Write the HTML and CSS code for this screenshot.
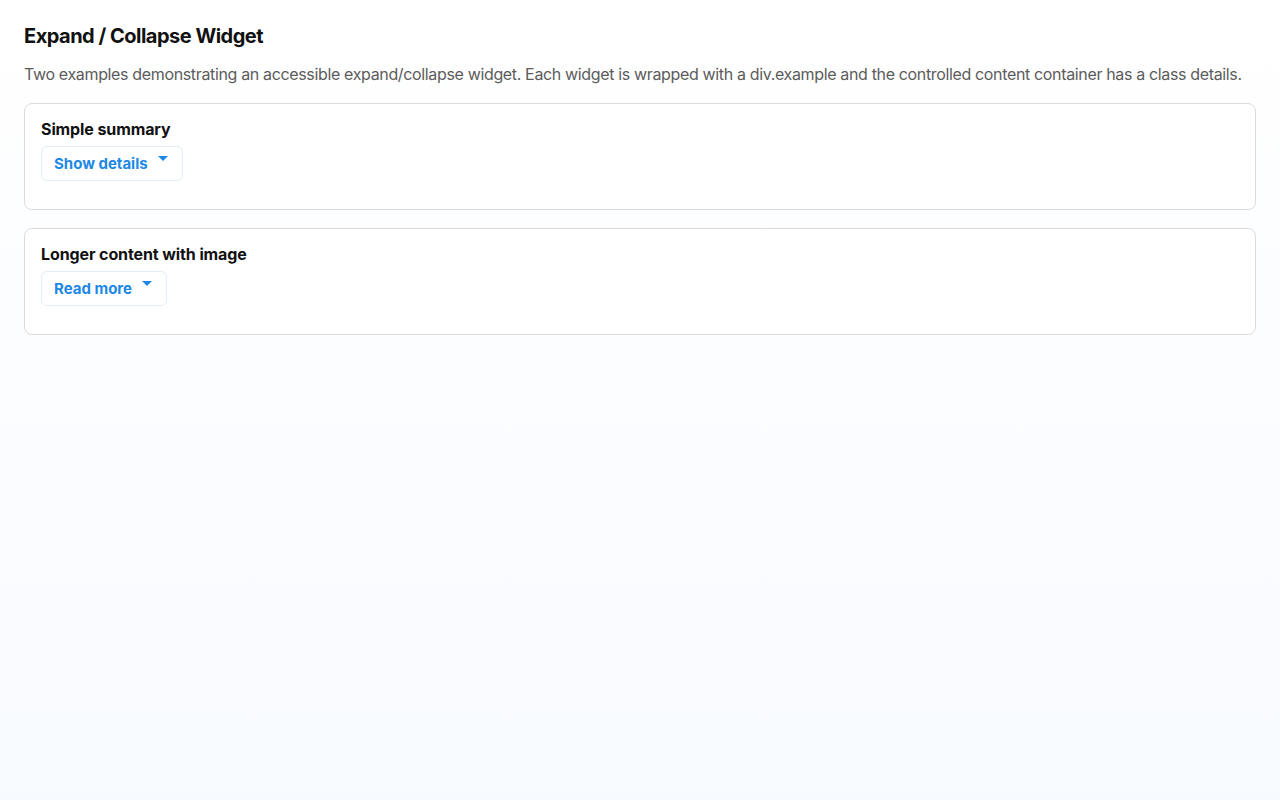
FILE: index.html
```html
<!DOCTYPE html>
<html lang="en">
  <head>
    <meta charset="UTF-8" />
    <meta name="viewport" content="width=device-width, initial-scale=1.0" />
    <title>Expand / Collapse Widget</title>
    <link rel="stylesheet" href="styles.css">
  </head>
  <body>
    <main class="page">
      <h1 class="page-title">Expand / Collapse Widget</h1>
      <p class="intro">Two examples demonstrating an accessible expand/collapse widget. Each widget is wrapped with a div.example and the controlled content container has a class details.</p>

      <div class="example">
        <div class="summary">Simple summary</div>
        <button class="toggle" aria-expanded="false" aria-controls="details1">Show details</button>
        <div class="details" id="details1" hidden>
          <p>Here are some extra details that were hidden until you asked for them.</p>
        </div>
      </div>

      <div class="example">
        <div class="summary">Longer content with image</div>
        <button class="toggle" aria-expanded="false" aria-controls="details2">Read more</button>
        <div class="details" id="details2" hidden>
          <p>Longer content goes here.</p>
        </div>
      </div>
    </main>
  </body>
</html>
```

FILE: styles.css
```css
html {
  min-height: 100%;
  background: linear-gradient(180deg, #ffffff 0%, #f7faff 100%);
}

body {
  margin: 0;
  padding: 24px;
  font-family: Inter, "Noto Sans", sans-serif;
  color: #111;
}

.page-title {
  margin: 0 0 14px;
  font-size: 20px;
  font-weight: 700;
  line-height: 24px;
  letter-spacing: -0.5px;
  color: #111;
}

.intro {
  margin: 0 0 17px;
  font-size: 16px;
  line-height: 24px;
  letter-spacing: -0.35px;
  color: #5c5c5c;
}

.example {
  background: #fff;
  border: 1px solid #dcdcdc;
  border-radius: 8px;
  padding: 16px 16px 28px;
  margin-bottom: 18px;
}

.summary {
  font-size: 16px;
  font-weight: 700;
  line-height: 18px;
  letter-spacing: -0.1px;
  margin-bottom: 8px;
  color: #111;
}

.toggle {
  display: inline-flex;
  align-items: flex-start;
  font-family: inherit;
  font-size: 15px;
  font-weight: 700;
  line-height: 18px;
  color: #1e88e5;
  background: #fff;
  border: 1px solid #e3ecf7;
  border-radius: 6px;
  padding: 8px 14px 7px 12px;
  cursor: pointer;
}

.toggle::after {
  content: "";
  width: 0;
  height: 0;
  margin: 1px 0 0 10px;
  border-left: 5px solid transparent;
  border-right: 5px solid transparent;
  border-top: 5px solid #1e88e5;
}

.details {
  margin-top: 12px;
}
```
